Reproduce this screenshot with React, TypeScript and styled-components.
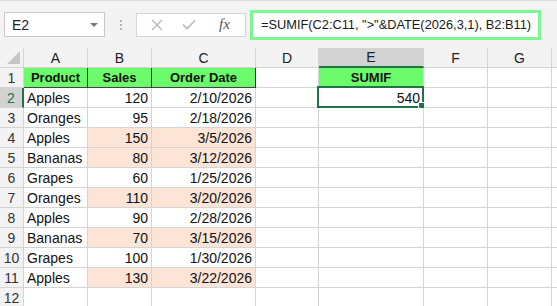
import React from 'react';
import styled, { createGlobalStyle } from 'styled-components';

const GlobalStyle = createGlobalStyle`
  html, body { margin: 0; padding: 0; background: #fff; }
  body { width: 557px; height: 306px; overflow: hidden; font-family: "Liberation Sans", Arial, sans-serif; }
`;

const COLS = ['A', 'B', 'C', 'D', 'E', 'F', 'G'];
const WIDTHS = '24px 64px 64px 104px 63px 105px 64px 64px 1fr';
const PEACH = '#fce4d6';
const GREEN = '#6bfb6b';
const SEL = '#217346';

const rows: { p: string; s: number; d: string; hit: boolean }[] = [
  { p: 'Apples', s: 120, d: '2/10/2026', hit: false },
  { p: 'Oranges', s: 95, d: '2/18/2026', hit: false },
  { p: 'Apples', s: 150, d: '3/5/2026', hit: true },
  { p: 'Bananas', s: 80, d: '3/12/2026', hit: true },
  { p: 'Grapes', s: 60, d: '1/25/2026', hit: false },
  { p: 'Oranges', s: 110, d: '3/20/2026', hit: true },
  { p: 'Apples', s: 90, d: '2/28/2026', hit: false },
  { p: 'Bananas', s: 70, d: '3/15/2026', hit: true },
  { p: 'Grapes', s: 100, d: '1/30/2026', hit: false },
  { p: 'Apples', s: 130, d: '3/22/2026', hit: true },
];

const Shell = styled.div`
  width: 557px;
  height: 306px;
  display: flex;
  flex-direction: column;
  overflow: hidden;
`;

const Toolbar = styled.div`
  height: 48px;
  flex: none;
  background: #f3f3f3;
  border-top: 1px solid #dadada;
  box-sizing: border-box;
  display: flex;
  align-items: center;
  padding: 0 0 0 4px;
`;

const NameBox = styled.div`
  width: 101px;
  height: 25px;
  box-sizing: border-box;
  background: #fff;
  border: 1px solid #c8c8c8;
  display: flex;
  align-items: center;
  justify-content: space-between;
  padding: 0 6px 0 7px;
  font-size: 14px;
  color: #222;
`;

const Caret = styled.span`
  width: 0;
  height: 0;
  border-left: 4px solid transparent;
  border-right: 4px solid transparent;
  border-top: 4px solid #777;
`;

const Dots = styled.div`
  width: 31px;
  display: flex;
  flex-direction: column;
  align-items: center;
  gap: 2px;
  & > span { width: 2px; height: 2px; background: #b4b4b4; }
`;

const FuncBox = styled.div`
  width: 110px;
  height: 24px;
  box-sizing: border-box;
  background: #fff;
  border: 1px solid #d6d6d6;
  display: flex;
  align-items: center;
  padding: 0 0 0 14px;
  gap: 19px;
`;

const Fx = styled.span`
  font-family: "Liberation Serif", "Times New Roman", serif;
  font-style: italic;
  font-size: 15px;
  color: #555;
  margin-left: 4px;
`;

const FormulaBox = styled.div`
  margin-left: 4px;
  width: 291px;
  height: 30px;
  box-sizing: border-box;
  background: #fff;
  border: 3px solid #7df591;
  display: flex;
  align-items: center;
  padding-left: 8px;
  font-size: 12.8px;
  color: #1a1a1a;
  white-space: nowrap;
`;

const Grid = styled.div`
  display: grid;
  grid-template-columns: ${WIDTHS};
  grid-auto-rows: 20px;
`;

const ColHead = styled.div<{ $sel?: boolean }>`
  box-sizing: border-box;
  background: ${({ $sel }) => ($sel ? '#d2d2d2' : '#f3f3f3')};
  border-right: 1px solid #d4d4d4;
  border-bottom: ${({ $sel }) => ($sel ? `2px solid ${SEL}` : '1px solid #d4d4d4')};
  display: flex;
  align-items: center;
  justify-content: center;
  font-size: 14px;
  color: #222;
`;

const Corner = styled.div`
  box-sizing: border-box;
  background: #f3f3f3;
  border-right: 1px solid #d4d4d4;
  border-bottom: 1px solid #d4d4d4;
  position: relative;
  &::after {
    content: '';
    position: absolute;
    right: 3px;
    bottom: 3px;
    border-left: 13px solid transparent;
    border-bottom: 13px solid #c6c6c6;
  }
`;

const RowHead = styled.div<{ $sel?: boolean }>`
  box-sizing: border-box;
  background: ${({ $sel }) => ($sel ? '#d2d2d2' : '#f3f3f3')};
  border-right: ${({ $sel }) => ($sel ? `2px solid ${SEL}` : '1px solid #d4d4d4')};
  border-bottom: 1px solid #d4d4d4;
  display: flex;
  align-items: center;
  justify-content: center;
  font-size: 14px;
  color: ${({ $sel }) => ($sel ? SEL : '#333')};
`;

const Cell = styled.div<{ $bg?: string; $right?: boolean; $bold?: boolean; $center?: boolean; $dark?: boolean }>`
  box-sizing: border-box;
  position: relative;
  background: ${({ $bg }) => $bg || '#fff'};
  border-right: 1px solid ${({ $dark }) => ($dark ? '#222' : '#d4d4d4')};
  border-bottom: 1px solid ${({ $dark }) => ($dark ? '#444' : '#d4d4d4')};
  display: flex;
  align-items: center;
  justify-content: ${({ $right, $center }) => ($center ? 'center' : $right ? 'flex-end' : 'flex-start')};
  padding: 0 3px;
  font-size: ${({ $bold }) => ($bold ? '13px' : '14px')};
  font-weight: ${({ $bold }) => ($bold ? 700 : 400)};
  color: #111;
  white-space: nowrap;
`;

const Selection = styled.div`
  position: absolute;
  left: -2px;
  top: -2px;
  right: -1px;
  bottom: -1px;
  border: 2px solid ${SEL};
  pointer-events: none;
  &::after {
    content: '';
    position: absolute;
    right: -4px;
    bottom: -4px;
    width: 6px;
    height: 6px;
    background: ${SEL};
    border: 1px solid #fff;
  }
`;

function Cross() {
  return (
    <svg width="12" height="12" viewBox="0 0 12 12">
      <path d="M1 1 L11 11 M11 1 L1 11" stroke="#b8b8b8" strokeWidth="1.4" fill="none" />
    </svg>
  );
}

function Check() {
  return (
    <svg width="14" height="11" viewBox="0 0 14 11">
      <path d="M1 5.5 L5 9.5 L13 1.5" stroke="#b8b8b8" strokeWidth="1.6" fill="none" />
    </svg>
  );
}

export default function App() {
  return (
    <Shell>
      <GlobalStyle />
      <Toolbar>
        <NameBox>
          E2
          <Caret />
        </NameBox>
        <Dots>
          <span />
          <span />
          <span />
        </Dots>
        <FuncBox>
          <Cross />
          <Check />
          <Fx>fx</Fx>
        </FuncBox>
        <FormulaBox>=SUMIF(C2:C11, "&gt;"&amp;DATE(2026,3,1), B2:B11)</FormulaBox>
      </Toolbar>
      <Grid>
        <Corner />
        {COLS.map((c) => (
          <ColHead key={c} $sel={c === 'E'}>{c}</ColHead>
        ))}
        <ColHead />

        <RowHead>1</RowHead>
        <Cell $bg={GREEN} $bold $center $dark>Product</Cell>
        <Cell $bg={GREEN} $bold $center $dark>Sales</Cell>
        <Cell $bg={GREEN} $bold $center $dark>Order Date</Cell>
        <Cell />
        <Cell $bg={GREEN} $bold $center>SUMIF</Cell>
        <Cell />
        <Cell />
        <Cell />

        {rows.map((r, i) => (
          <React.Fragment key={i}>
            <RowHead $sel={i === 0}>{i + 2}</RowHead>
            <Cell>{r.p}</Cell>
            <Cell $right $bg={r.hit ? PEACH : undefined}>{r.s}</Cell>
            <Cell $right $bg={r.hit ? PEACH : undefined}>{r.d}</Cell>
            <Cell />
            <Cell $right>
              {i === 0 ? '540' : ''}
              {i === 0 && <Selection />}
            </Cell>
            <Cell />
            <Cell />
            <Cell />
          </React.Fragment>
        ))}

        <RowHead>12</RowHead>
        {COLS.map((c) => (
          <Cell key={c} />
        ))}
        <Cell />
      </Grid>
    </Shell>
  );
}
